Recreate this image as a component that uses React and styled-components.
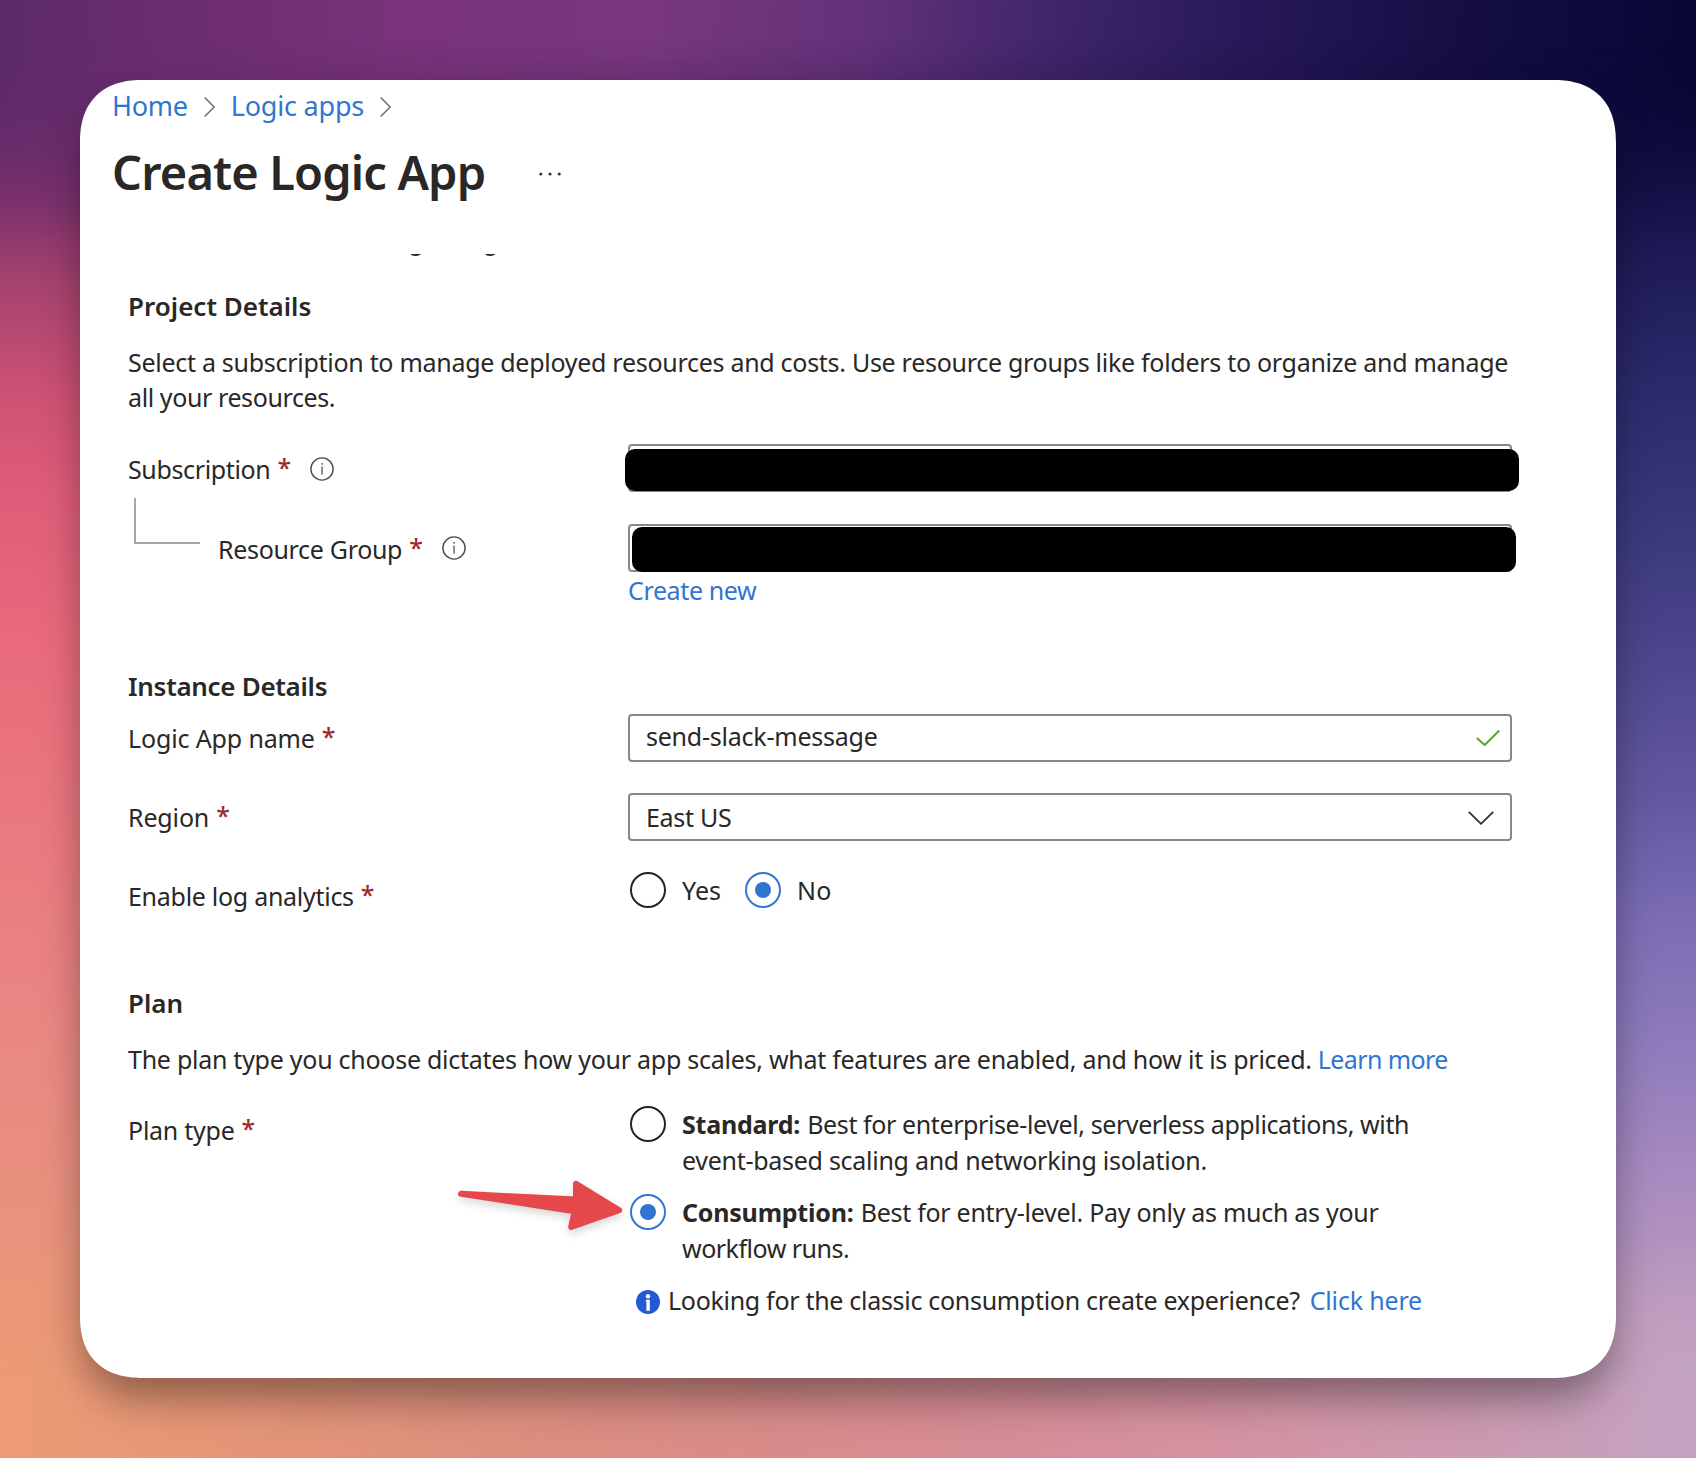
import React from "react";
import styled, { createGlobalStyle, css } from "styled-components";

const GlobalStyle = createGlobalStyle`
  *, *::before, *::after { box-sizing: border-box; }
  body {
    margin: 0;
    color: #292827;
    font-family: "Noto Sans", "Open Sans", sans-serif;
    font-size: 25px;
  }
  p, h1, h2 { margin: 0; }
`;

const Backdrop = styled.div`
  position: relative;
  isolation: isolate;
  width: 1696px;
  height: 1458px;
  padding: 80px;
  overflow: hidden;
  background: linear-gradient(
    180deg,
    #5c2a69 0%, #682b6b 7%, #81336d 14%, #a9446f 20%, #cd5274 27%, #e05d79 34%,
    #e96c7c 45%, #ea7a80 58%, #e98983 72%, #ea947c 86%, #ec9b75 100%
  );

  &::before {
    content: "";
    position: absolute;
    inset: 0;
    z-index: -2;
    background: linear-gradient(
      180deg,
      #06052f 0%, #0f0d3e 7%, #191650 15%, #2b296a 26%, #3c3a7d 37%, #4f4890 46%,
      #6459a1 55%, #7b6cb4 63%, #8f7cbc 72%, #a98bc0 81%, #bd9bbf 91%, #c5a4c2 100%
    );
    mask-image: linear-gradient(90deg, transparent 10%, #000 92%);
  }
`;

const EdgeGlow = styled.div`
  position: absolute;
  left: 0;
  right: 0;
  z-index: -1;
  height: 260px;
  ${({ $edge }) =>
    $edge === "top"
      ? css`
          top: 0;
          background: linear-gradient(
            94deg,
            #5c2a69 0%, #6b2d6f 10%, #79337a 24%, #78377e 38%, #643279 50%, #41266b 61%,
            #281a59 72%, #170f46 84%, #0b0a3b 94%, #060532 100%
          );
          mask-image: linear-gradient(180deg, #000 15%, transparent 90%);
        `
      : css`
          bottom: 0;
          background: linear-gradient(
            90deg,
            #ec9b75 0%, #e49577 15%, #dd8f7e 30%, #d88b89 45%, #d68d97 60%, #d593a2 72%,
            #cc99af 86%, #c3a3c2 100%
          );
          mask-image: linear-gradient(0deg, #000 20%, transparent 85%);
        `}
`;

const Card = styled.main`
  height: 1298px;
  padding: 8px 104px 0 32px;
  border-radius: 63px;
  corner-shape: superellipse(1.25);
  background: #fff;
  box-shadow: 0 23px 42px -4px rgba(0, 0, 0, 0.4);
`;

const Text = styled.span`
  letter-spacing: ${({ $ls = 0 }) => $ls}px;
  white-space: nowrap;
`;

const Link = styled.a`
  color: #2f76d2;
  letter-spacing: ${({ $ls = 0 }) => $ls}px;
  text-decoration: none;
  white-space: nowrap;
`;

const Breadcrumb = styled.nav`
  display: flex;
  align-items: center;
  gap: 16px;
  height: 36px;
  font-size: 27px;
  line-height: 36px;
`;

const SeparatorIcon = styled.svg`
  margin-top: 2px;
`;

const TitleRow = styled.header`
  display: flex;
  align-items: center;
  gap: 53px;
  height: 64px;
  margin-top: 16px;
`;

const Title = styled.h1`
  font-size: 47px;
  font-weight: 600;
  line-height: 64px;
  letter-spacing: -0.85px;
`;

const MoreDots = styled.svg`
  margin-top: 4px;
`;

const ScrolledLine = styled.div`
  display: flex;
  height: 3px;
  margin: 50px 0 31px 282px;
`;

const Section = styled.section`
  margin: ${({ $top = 0 }) => $top}px 0 0 16px;
`;

const Heading = styled.h2`
  padding-bottom: 1px;
  font-size: 26px;
  font-weight: 600;
  line-height: 36px;
  letter-spacing: ${({ $ls = 0.1 }) => $ls}px;
`;

const Paragraph = styled.p`
  display: flex;
  flex-direction: ${({ $inline }) => ($inline ? "row" : "column")};
  gap: ${({ $inline }) => ($inline ? "6px" : "0")};
  margin-top: ${({ $top = 20 }) => $top}px;
  line-height: 35px;
`;

const Row = styled.div`
  display: grid;
  grid-template-columns: 500px 884px;
  align-items: start;
  margin-top: ${({ $top }) => $top}px;
`;

const Label = styled.div`
  display: flex;
  align-items: center;
  height: ${({ $h = 48 }) => $h}px;
  line-height: ${({ $h = 48 }) => $h}px;
`;

const Required = styled.span`
  margin: 0 0 4px 7px;
  color: #9c2a2d;
  font-weight: 500;
`;

const InfoSlot = styled.span`
  display: flex;
  margin: 0 0 ${({ $raise = 0 }) => $raise}px 19px;
`;

const Elbow = styled.span`
  align-self: flex-start;
  width: 66px;
  height: 46px;
  margin: -26px 18px 0 6px;
  border: solid #a6a6a6;
  border-width: 0 0 2px 2px;
`;

const FieldWrap = styled.div`
  position: relative;
`;

const Field = styled.div`
  display: flex;
  align-items: center;
  justify-content: space-between;
  height: 48px;
  padding: 0 ${({ $end = 10 }) => $end}px ${({ $lift = 0 }) => $lift}px ${({ $start = 16 }) => $start}px;
  border: 2px solid #8a8886;
  border-radius: 4px;
`;

const FieldIcon = styled.svg`
  margin-top: ${({ $drop }) => $drop}px;
`;

const Redaction = styled.div`
  position: absolute;
  top: ${({ $top }) => $top}px;
  left: ${({ $left }) => $left}px;
  width: ${({ $w }) => $w}px;
  height: ${({ $h }) => $h}px;
  border-radius: 10px;
  background: #000;
`;

const CreateNew = styled.div`
  line-height: 36px;
`;

const RadioGroup = styled.div`
  display: flex;
  gap: 24px;
  padding-left: 2px;
  line-height: 36px;
`;

const PlanOptions = styled.div`
  position: relative;
  display: flex;
  flex-direction: column;
  gap: 16px;
  padding-left: 2px;
  line-height: 36px;
`;

const Option = styled.label`
  display: flex;
  align-items: flex-start;
  gap: 16px;
`;

const RadioDot = styled.span`
  display: flex;
  align-items: center;
  justify-content: center;
  flex: none;
  width: 36px;
  height: 36px;
  border: 2px solid ${({ $on }) => ($on ? "#2f76d2" : "#252423")};
  border-radius: 50%;

  &::after {
    content: "";
    width: 16px;
    height: 16px;
    border-radius: 50%;
    background: ${({ $on }) => ($on ? "#2f76d2" : "transparent")};
  }
`;

const OptionText = styled.span`
  display: flex;
  flex-direction: column;
`;

const Strong = styled.b`
  margin-right: 1px;
  font-weight: 700;
  letter-spacing: -0.22px;
`;

const Notice = styled.div`
  display: flex;
  align-items: center;
  padding-left: 6px;
`;

const NoticeText = styled.span`
  margin: 0 10px 0 8px;
`;

const NoticeBadge = styled.svg`
  margin-top: 4px;
`;

const Arrow = styled.svg`
  position: absolute;
  top: 69px;
  left: -178px;
  filter: drop-shadow(0 4px 4px rgba(0, 0, 0, 0.16));
`;

const Separator = () => (
  <SeparatorIcon width="11" height="20" viewBox="0 0 11 20" fill="none" stroke="#6b6a69" strokeWidth="1.4">
    <path d="M0.6 0.5 10.2 10 0.6 19.5" />
  </SeparatorIcon>
);

const InfoOutline = ({ raise }) => (
  <InfoSlot $raise={raise}>
    <svg width="24" height="24" viewBox="0 0 24 24" fill="none">
      <circle cx="12" cy="12" r="11.1" stroke="#4d4c4b" strokeWidth="1.4" />
      <rect x="11.3" y="6" width="1.5" height="1.8" fill="#6b6a69" />
      <rect x="11.3" y="9.6" width="1.5" height="8" fill="#6b6a69" />
    </svg>
  </InfoSlot>
);

export default function App() {
  return (
    <>
      <GlobalStyle />
      <Backdrop>
        <EdgeGlow $edge="top" />
        <EdgeGlow $edge="bottom" />
        <Card>
          <Breadcrumb>
            <Link $ls={-0.27}>Home</Link>
            <Separator />
            <Link $ls={-0.2}>Logic apps</Link>
            <Separator />
          </Breadcrumb>
          <TitleRow>
            <Title>Create Logic App</Title>
            <MoreDots width="24" height="6" viewBox="0 0 24 6" fill="#3b3a39">
              <circle cx="2.8" cy="3" r="1.6" />
              <circle cx="12" cy="3" r="1.6" />
              <circle cx="21.2" cy="3" r="1.6" />
            </MoreDots>
          </TitleRow>
          <ScrolledLine>
            <svg width="104" height="3" viewBox="0 0 104 3" fill="#292827">
              <path d="M17 0H27Q25 2 22 2Q19 2 17 0.8Z" />
              <path d="M91.5 0H101.5Q99.5 2 96.5 2Q93.5 2 91.5 0.8Z" />
            </svg>
          </ScrolledLine>

          <Section>
            <Heading $ls={0}>Project Details</Heading>
            <Paragraph>
              <Text $ls={-0.285}>
                Select a subscription to manage deployed resources and costs. Use resource groups like folders to organize and manage
              </Text>
              <Text $ls={-0.4}>all your resources.</Text>
            </Paragraph>
            <Row $top={29}>
              <Label $h={50}>
                <Text $ls={-0.36}>Subscription</Text>
                <Required>*</Required>
                <InfoOutline />
              </Label>
              <FieldWrap>
                <Field />
                <Redaction $top={5} $left={-3} $w={893.5} $h={41.5} />
              </FieldWrap>
            </Row>
            <Row $top={30}>
              <Label $h={50}>
                <Elbow />
                <Text $ls={-0.32}>Resource Group</Text>
                <Required>*</Required>
                <InfoOutline raise={2} />
              </Label>
              <FieldWrap>
                <Field />
                <Redaction $top={3} $left={4} $w={884} $h={45} />
                <CreateNew>
                  <Link $ls={-0.37}>Create new</Link>
                </CreateNew>
              </FieldWrap>
            </Row>
          </Section>

          <Section $top={60}>
            <Heading $ls={-0.3}>Instance Details</Heading>
            <Row $top={9}>
              <Label>
                <Text $ls={-0.14}>Logic App name</Text>
                <Required>*</Required>
              </Label>
              <Field $lift={4}>
                <Text $ls={-0.23}>send-slack-message</Text>
                <FieldIcon $drop={2} width="25" height="18" viewBox="0 0 25 18" fill="none" stroke="#5ba327" strokeWidth="2">
                  <path d="M1.8 10 9.7 17 24.3 2.5" />
                </FieldIcon>
              </Field>
            </Row>
            <Row $top={31}>
              <Label>
                <Text $ls={-0.15}>Region</Text>
                <Required>*</Required>
              </Label>
              <Field $end={16}>
                <Text $ls={-0.3}>East US</Text>
                <FieldIcon $drop={1} width="26" height="14" viewBox="0 0 26 14" fill="none" stroke="#323130" strokeWidth="1.8">
                  <path d="M0.8 0.8 13 12.8 25.2 0.8" />
                </FieldIcon>
              </Field>
            </Row>
            <Row $top={31}>
              <Label>
                <Text $ls={-0.28}>Enable log analytics</Text>
                <Required>*</Required>
              </Label>
              <RadioGroup>
                <Option>
                  <RadioDot />
                  <Text>Yes</Text>
                </Option>
                <Option>
                  <RadioDot $on />
                  <Text $ls={0.3}>No</Text>
                </Option>
              </RadioGroup>
            </Row>
          </Section>

          <Section $top={65}>
            <Heading $ls={0}>Plan</Heading>
            <Paragraph $inline>
              <Text $ls={-0.265}>
                The plan type you choose dictates how your app scales, what features are enabled, and how it is priced.
              </Text>
              <Link $ls={-0.6}>Learn more</Link>
            </Paragraph>
            <Row $top={29}>
              <Label>
                <Text $ls={-0.25}>Plan type</Text>
                <Required>*</Required>
              </Label>
              <PlanOptions>
                <Option>
                  <RadioDot />
                  <OptionText>
                    <Text $ls={-0.4}>
                      <Strong>Standard:</Strong> Best for enterprise-level, serverless applications, with
                    </Text>
                    <Text $ls={-0.28}>event-based scaling and networking isolation.</Text>
                  </OptionText>
                </Option>
                <Option>
                  <RadioDot $on />
                  <OptionText>
                    <Text $ls={-0.28}>
                      <Strong>Consumption:</Strong> Best for entry-level. Pay only as much as your
                    </Text>
                    <Text $ls={-0.5}>workflow runs.</Text>
                  </OptionText>
                </Option>
                <Notice>
                  <NoticeBadge width="24" height="24" viewBox="0 0 24 24">
                    <circle cx="12" cy="12" r="12" fill="#2459d6" />
                    <circle cx="12" cy="6.2" r="2.2" fill="#fff" />
                    <path d="M9.8 9.8H13.8V20.8H10.4V11.4H9.8Z" fill="#fff" />
                  </NoticeBadge>
                  <NoticeText>
                    <Text $ls={-0.3}>Looking for the classic consumption create experience?</Text>
                  </NoticeText>
                  <Link $ls={-0.18}>Click here</Link>
                </Notice>
                <Arrow width="180" height="64" viewBox="450 1175 180 64">
                  <path
                    d="M461 1193.7 576 1199.6V1183.7L619.2 1210.2 571.2 1227 574.6 1211.3Z"
                    fill="#e5484a"
                    stroke="#e5484a"
                    strokeWidth="6"
                    strokeLinejoin="round"
                  />
                </Arrow>
              </PlanOptions>
            </Row>
          </Section>
        </Card>
      </Backdrop>
    </>
  );
}
